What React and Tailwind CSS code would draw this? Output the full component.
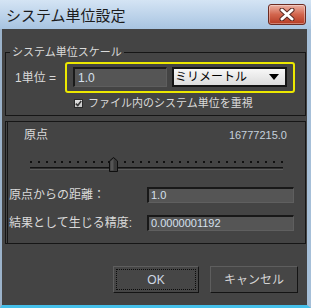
import React from 'react';

const ticks = Array.from({ length: 33 });

const CloseButton = () => (
  <div className="w-[38px] h-[21px] rounded-[3px] border border-[#6b2b22] bg-gradient-to-b from-[#eab0a3] via-[#d2654d] to-[#b53a23] flex items-center justify-center shadow-[inset_0_0_0_1px_rgba(255,255,255,0.35)]">
    <svg width="16" height="13" viewBox="0 0 16 13">
      <path d="M3 2 L13 11 M13 2 L3 11" stroke="#5a2a24" strokeWidth="5" strokeLinecap="round" />
      <path d="M3 2 L13 11 M13 2 L3 11" stroke="#ffffff" strokeWidth="3" strokeLinecap="round" />
    </svg>
  </div>
);

const Field = ({ value, className = '' }) => (
  <div className={`h-[16px] w-[147px] bg-[#555555] border-t-2 border-l-2 border-[#181818] border-b border-r border-b-[#5f5f5f] border-r-[#5f5f5f] flex items-center pl-[2px] text-[11px] text-[#d6e0ee] ${className}`}>
    {value}
  </div>
);

const App = () => {
  return (
    <div className="w-[311px] h-[308px] flex flex-col bg-[#444444] font-['Liberation_Sans','Noto_Sans_CJK_JP',sans-serif] text-[11px] leading-none text-[#dadada] overflow-hidden">
      {/* Title bar */}
      <div className="h-[29px] shrink-0 flex items-start justify-between pl-[6px] pr-[5px] pt-[4px] bg-gradient-to-b from-[#d4e4f4] to-[#a8c4e1]">
        <span className="mt-[3px] text-[15px] text-[#1c1c1c] font-['Noto_Sans_CJK_JP',sans-serif]">システム単位設定</span>
        <CloseButton />
      </div>

      {/* Body */}
      <div className="flex-1 flex flex-col border-l-2 border-r-4 border-b-[3px] border-l-[#9cb3cb] border-r-[#a6bfd8] border-b-[#46c0ea]">
        {/* System unit scale */}
        <fieldset className="mt-[15px] ml-[3px] mr-[1px] border border-[#161616] pb-[5px]">
          <legend className="ml-[4px] px-[2px] h-[16px] flex items-center">システム単位スケール</legend>
          <div className="flex items-center mt-[2px]">
            <span className="pl-[9px] w-[59px] text-[12px]">1単位 =</span>
            <div className="w-[230px] h-[31px] rounded-[3px] border-2 border-[#ece800] pl-[6px] pt-[3px] flex gap-[5px]">
              <div className="w-[94px] h-[20px] bg-[#555555] border-t-2 border-l-2 border-[#1a1a1a] border-b border-r border-b-[#5e5e5e] border-r-[#5e5e5e] flex items-center pl-[3px] text-[12px] text-[#d6e0ee]">
                1.0
              </div>
              <div className="w-[115px] h-[20px] border-2 border-[#141414] bg-gradient-to-b from-[#f7f7f7] to-[#dcdcdc] flex items-center justify-between pl-[1px] pr-[6px] text-[12px] text-black">
                <span>ミリメートル</span>
                <svg width="10" height="6" viewBox="0 0 10 6">
                  <path d="M0 0 H10 L5 6 Z" fill="#000" />
                </svg>
              </div>
            </div>
          </div>
          <div className="h-[14px] mt-[3px] ml-[68px] flex items-center gap-[5px]">
            <div className="w-[9px] h-[9px] border border-[#2a2a2a] bg-gradient-to-b from-[#e4e4e4] to-[#c4c4c4] flex items-center justify-center">
              <svg width="7" height="7" viewBox="0 0 7 7">
                <path d="M0.8 3.6 L2.8 5.6 L6.2 1" stroke="#3a3a3a" strokeWidth="1.6" fill="none" />
              </svg>
            </div>
            <span>ファイル内のシステム単位を重視</span>
          </div>
        </fieldset>

        {/* Origin panel */}
        <div className="mt-[5px] ml-[3px] mr-[1px] h-[123px] border border-[#161616] pl-px">
          <div className="h-full border-l border-[#161616] flex flex-col">
            <div className="h-[16px] mt-[5px] pl-[16px] pr-[18px] flex items-center justify-between">
              <span className="text-[12px]">原点</span>
              <span className="text-[11px] text-[#c4d0dc]">16777215.0</span>
            </div>

            <div className="relative mt-[14px] ml-[22px] w-[253px] h-[15px]">
              <div className="pt-[4px] flex justify-between">
                {ticks.map((_, i) => (
                  <span key={i} className="w-[2px] h-[2px] bg-[#101010]" />
                ))}
              </div>
              <div className="mt-[4px] h-[3px] border-t border-[#121212] border-b border-b-[#5a5a5a] bg-[#2e2e2e]" />
              <svg className="absolute left-[79px] top-0" width="9" height="15" viewBox="0 0 9 15">
                <path d="M0.5 4 L4.5 0.5 L8.5 4 V14.5 H0.5 Z" fill="#3a3a3a" stroke="#0e0e0e" />
                <path d="M1.5 4.4 L4.5 1.8 V13.5 H1.5 Z" fill="#555555" />
              </svg>
            </div>

            <div className="mt-[15px] pl-[1px] pr-[11px] flex items-center justify-between">
              <span className="text-[12px]">原点からの距離：</span>
              <Field value="1.0" />
            </div>
            <div className="mt-[12px] pl-[1px] pr-[11px] flex items-center justify-between">
              <span className="text-[12px]">結果として生じる精度:</span>
              <Field value="0.0000001192" />
            </div>
          </div>
        </div>

        {/* Buttons */}
        <div className="mt-[22px] pr-[9px] flex justify-end gap-[11px]">
          <button className="w-[86px] h-[27px] bg-[#464646] border border-t-[#5e5e5e] border-l-[#5e5e5e] border-b-[#141414] border-r-[#141414] p-[2px]">
            <div className="w-full h-full border border-dotted border-[#0c0c0c] flex items-center justify-center text-[12px] text-[#cfd8e4]">
              OK
            </div>
          </button>
          <button className="w-[88px] h-[27px] bg-[#464646] border border-t-[#5e5e5e] border-l-[#5e5e5e] border-b-[#141414] border-r-[#141414] flex items-center justify-center text-[12px] text-[#d4d4d4]">
            キャンセル
          </button>
        </div>
      </div>
    </div>
  );
};

export default App;
